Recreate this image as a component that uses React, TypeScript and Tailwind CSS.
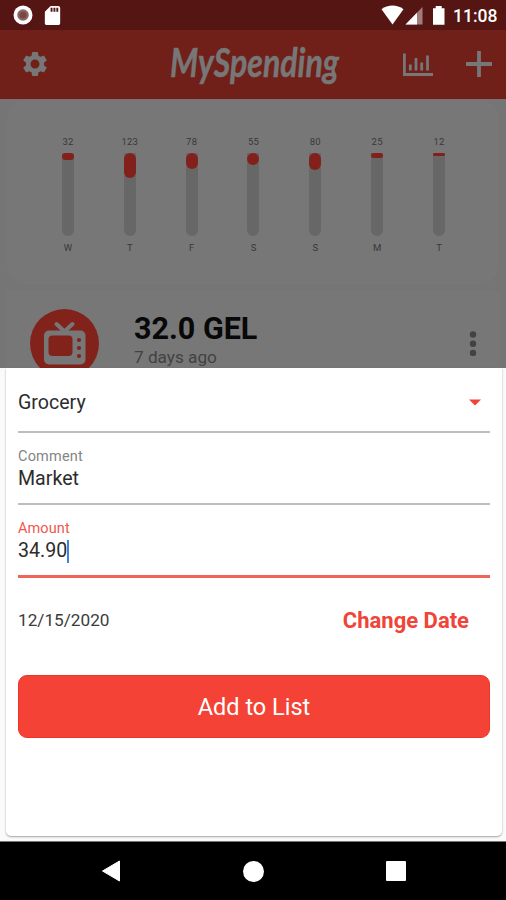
import React from "react";
import { MdSettings, MdSdCard } from "react-icons/md";

type DayType = { day: string; total: number; fill: number };

const week: DayType[] = [
  { day: "W", total: 32, fill: 7 },
  { day: "T", total: 123, fill: 25 },
  { day: "F", total: 78, fill: 16 },
  { day: "S", total: 55, fill: 12 },
  { day: "S", total: 80, fill: 17 },
  { day: "M", total: 25, fill: 5 },
  { day: "T", total: 12, fill: 3 },
];

function StatusBar() {
  return (
    <div className="flex h-[30px] shrink-0 items-center bg-[#551512] pl-[13px] pr-[9px] text-white">
      <svg width="20" height="20" viewBox="0 0 20 20">
        <circle cx="10" cy="10" r="9.5" fill="#fff" />
        <circle cx="10" cy="10" r="5.8" fill="#8c6866" />
        <circle cx="10" cy="10" r="3.5" fill="#794744" />
      </svg>
      <MdSdCard className="ml-[8px] size-[23px]" />
      <div className="grow" />
      <svg className="ml-px" width="66" height="22" viewBox="0 0 66 22" fill="#fff">
        <path d="M0.500 5.200C7 0.300 16 0.300 22.500 5.200L11.500 20.500Z" />
        <path d="M41.500 3V20.500H24.500Z" opacity=".45" />
        <path d="M36 8.700V20.500H24.500Z" />
        <path d="M52 4.300h2.700V2h6v2.300h2.800v16.500H52z" />
      </svg>
      <span className="ml-[6px] w-[44px] whitespace-nowrap pt-[3px] text-[17.500px] font-medium leading-none">
        11:08
      </span>
    </div>
  );
}

function Header() {
  return (
    <div className="flex h-[69px] shrink-0 items-center border-b border-[#741a13] bg-[#701f19] pl-[20px] pr-[13px] text-[#777]">
      <MdSettings className="size-[30px]" />
      <svg
        className="ml-[117px] overflow-visible"
        width="176"
        height="58"
        viewBox="0 0 176 58"
        fill="currentColor"
        stroke="currentColor"
        strokeWidth="0.5"
      >
        <text
          x="3"
          y="42"
          textLength="169"
          lengthAdjust="spacingAndGlyphs"
          className="font-['Lato'] text-[41px] font-bold italic"
        >
          MySpending
        </text>
      </svg>
      <svg
        className="ml-[59px]"
        width="32"
        height="26"
        viewBox="0 0 32 26"
        fill="none"
        stroke="currentColor"
        strokeWidth="2.800"
      >
        <path d="M2.400 2.500V23.500H31" />
        <path d="M8.300 13.500V19.500M14 7V19.500M19.700 11.500V19.500M25.500 4.500V19.500" />
      </svg>
      <div className="grow" />
      <svg width="28" height="28" viewBox="0 0 28 28" stroke="currentColor" strokeWidth="3.800">
        <path d="M14 1V27M1 14H27" />
      </svg>
    </div>
  );
}

function WeekChart() {
  return (
    <div className="mx-[7px] mt-px flex h-[184px] shrink-0 justify-between rounded-[18px] bg-[#777] pl-[46px] pr-[45px] pt-[36px]">
      {week.map((item, i) => (
        <div key={i} className="flex w-[30px] flex-col items-center text-[9.500px] leading-[12px] text-[#383838]">
          <span className="tracking-[0.200px]">{item.total}</span>
          <div className="mt-[5px] h-[83px] w-[12px] overflow-hidden rounded-b-[6px] bg-[#676767]">
            <div className="rounded-[6px] bg-[#82211c]" style={{ height: item.fill }} />
          </div>
          <span className="mt-[6px]">{item.day}</span>
        </div>
      ))}
    </div>
  );
}

function SpendingCard() {
  return (
    <div className="mx-[6px] mt-[6px] flex grow items-start overflow-hidden rounded-t-[4px] bg-[#777] pl-[24px] pr-[23px]">
      <svg className="mt-[19px] shrink-0" width="69" height="69" viewBox="0 0 69 69">
        <circle cx="34.500" cy="34.500" r="34.500" fill="#82231b" />
        <path
          d="M26.500 15L34.500 22.500L42.500 15"
          fill="none"
          stroke="#777"
          strokeWidth="4"
          strokeLinecap="round"
        />
        <rect x="14" y="21.500" width="41.500" height="34" rx="5" fill="#777" />
        <rect x="18.500" y="26.500" width="24" height="20.500" rx="4" fill="#82231b" />
        <circle cx="49" cy="31" r="2.100" fill="#82231b" />
        <circle cx="49" cy="39" r="2.100" fill="#82231b" />
        <circle cx="49" cy="47" r="2.100" fill="#82231b" />
      </svg>
      <div className="ml-[35px] mt-[21px] grow whitespace-nowrap">
        <p className="text-[30.500px] font-bold leading-[36px] text-[#080808]">32.0 GEL</p>
        <p className="text-[17.200px] leading-[20px] text-[#424242]">7 days ago</p>
      </div>
      <svg className="mt-[41px]" width="8" height="26" viewBox="0 0 8 26" fill="#424242">
        <circle cx="4" cy="3.500" r="3.200" />
        <circle cx="4" cy="12.700" r="3.200" />
        <circle cx="4" cy="21.900" r="3.200" />
      </svg>
    </div>
  );
}

function AddSheet() {
  return (
    <div className="h-[473px] shrink-0 bg-[#fafafa] pb-[5px] pl-[6px] pr-[4px]">
      <div className="flex h-full flex-col rounded-b-[5px] bg-white px-[12px] text-[#2c2c2c] shadow-[0_1px_2px_rgba(0,0,0,0.35)]">
        <div className="flex h-[65px] items-center justify-between border-b-2 border-[#bdbdbd] pr-[9px] pt-[6px]">
          <span className="text-[19.600px]">Grocery</span>
          <svg width="12" height="7" viewBox="0 0 12 7" fill="#f44336">
            <path d="M0 0.500H12L6 6.500Z" />
          </svg>
        </div>
        <div className="h-[72px] border-b-2 border-[#bdbdbd] pt-[14px]">
          <p className="text-[14.500px] leading-[20px] tracking-[0.200px] text-[#858585]">Comment</p>
          <p className="text-[19.600px] leading-[24px]">Market</p>
        </div>
        <div className="h-[73px] border-b-[3px] border-[#f0645c] pt-[14px]">
          <p className="text-[14.500px] leading-[20px] tracking-[0.100px] text-[#f2564d]">Amount</p>
          <div className="flex items-center">
            <span className="text-[19.600px] leading-[24px]">34.90</span>
            <span className="h-[23px] w-[2px] bg-[#3f83dc]" />
          </div>
        </div>
        <div className="mt-[29px] flex h-[26px] items-center justify-between pr-[21px]">
          <span className="pt-[2px] text-[17.200px] text-[#3b3b3b]">12/15/2020</span>
          <span className="text-[22px] font-bold text-[#f04438]">Change Date</span>
        </div>
        <button className="mt-[42px] h-[63px] shrink-0 rounded-[9px] border border-[#ef3427] bg-[#f44336] pt-[3px] text-[23.500px] text-white">
          Add to List
        </button>
      </div>
    </div>
  );
}

function NavBar() {
  return (
    <div className="flex h-[59px] shrink-0 items-center justify-between border-t border-[#777] bg-black pl-[101px] pr-[100px]">
      <svg width="20" height="22" viewBox="0 0 20 22" fill="#fff" stroke="#fff" strokeLinejoin="round">
        <path d="M1.500 11L18.500 1V21Z" />
      </svg>
      <div className="size-[21px] rounded-full bg-white" />
      <div className="size-[20px] rounded-[1px] bg-white" />
    </div>
  );
}

function App() {
  return (
    <div className="flex h-[900px] w-[506px] flex-col overflow-hidden bg-[#757575] font-['Roboto',sans-serif]">
      <StatusBar />
      <Header />
      <WeekChart />
      <SpendingCard />
      <AddSheet />
      <NavBar />
    </div>
  );
}

export default App;
